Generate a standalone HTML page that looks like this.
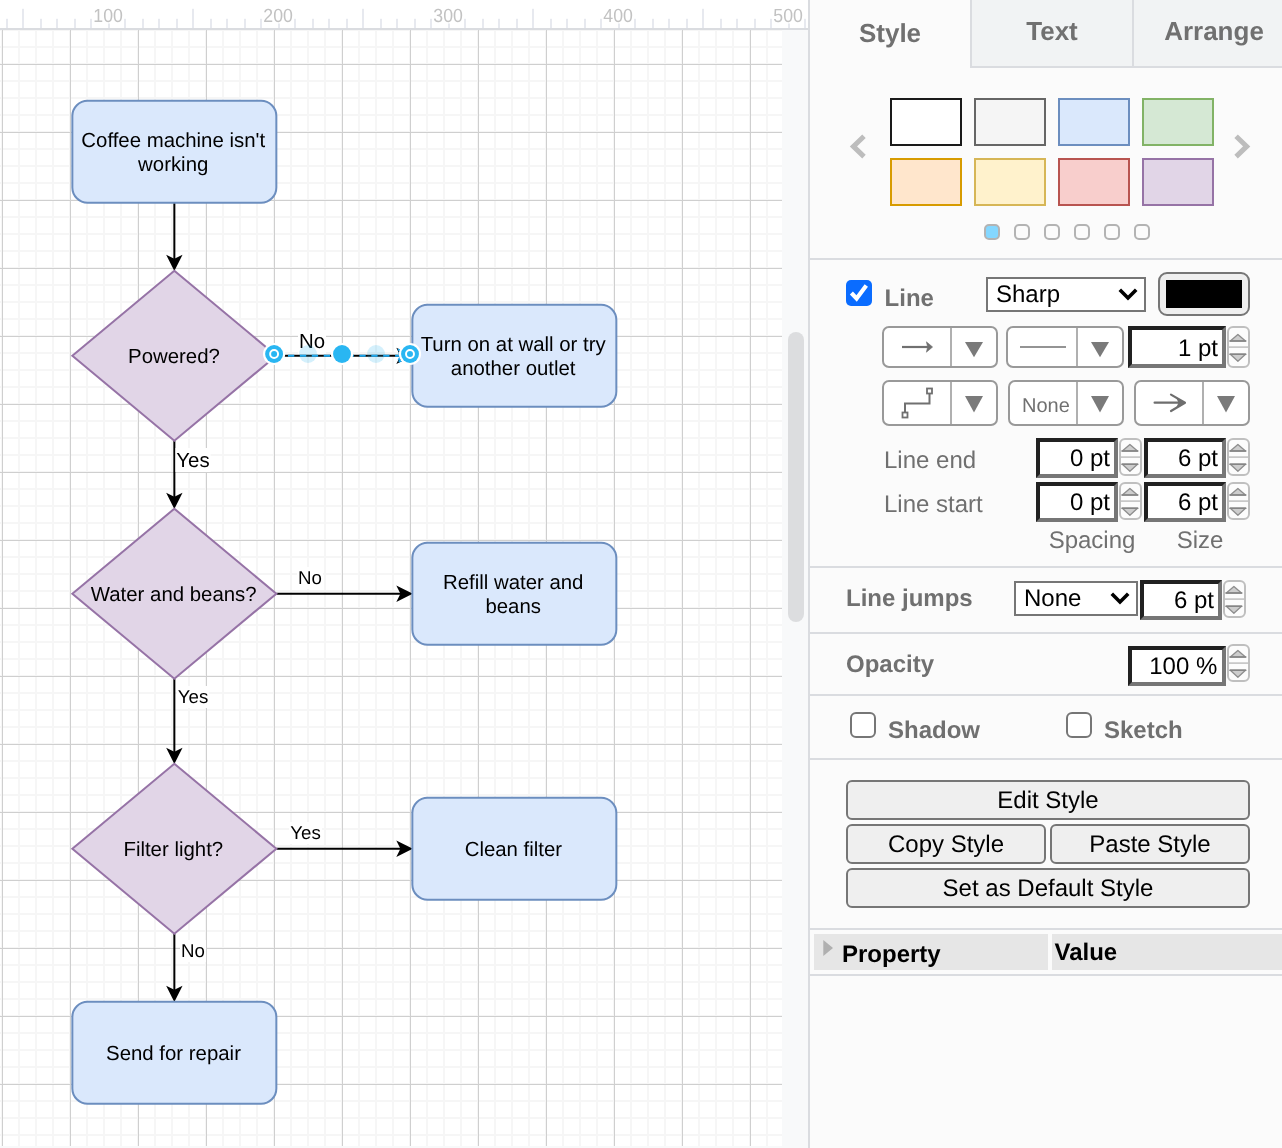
<!DOCTYPE html>
<html lang="en"><head><meta charset="utf-8"><title>Flowchart editor</title>
<style>
*{box-sizing:border-box}
html,body{margin:0;padding:0}
body{width:1282px;height:1148px;overflow:hidden;position:relative;background:#fff;-webkit-font-smoothing:antialiased;text-rendering:geometricPrecision;font-family:"Liberation Sans",sans-serif;color:#000}
.abs{position:absolute}
#canvas{left:0;top:30px;width:782px;height:1116px;background-color:#fff;
 background-image:
  linear-gradient(to right,#cfcfcf 1px,transparent 1px),
  linear-gradient(to bottom,#cfcfcf 1px,transparent 1px),
  linear-gradient(to right,#f6f6f6 2px,transparent 2px),
  linear-gradient(to bottom,#f6f6f6 2px,transparent 2px);
 background-size:68px 68px,68px 68px,17px 17px,17px 17px;
 background-position:2px 34px,2px 34px,1px -1px,1px -1px;}
#track{left:782px;top:30px;width:26px;height:1118px;background:#f8f9fa}
#thumb{left:788px;top:332px;width:16px;height:290px;border-radius:8px;background:#dcdddf}
#ruler{left:0;top:0;width:808px;height:30px;background:#fff;border-bottom:2px solid #dadce0}
#panel{left:808px;top:0;width:474px;height:1148px;background:#fbfbfb;border-left:2px solid #dadce0}
.tab{top:0;height:68px;font-weight:bold;font-size:26px;color:#707070;text-align:center;line-height:30px}
.tab.off{background:#f1f3f4;border-left:2px solid #dadce0;border-bottom:2px solid #dadce0}
.hr{left:810px;width:472px;height:2px;background:#dadce0}
.sw{width:72px;height:48px;border:2px solid #000}
.dot{width:16px;height:16px;border:2px solid #b3b3b3;border-radius:5px;top:224px}
.lbl{font-size:24px;color:#707070;white-space:nowrap;line-height:28px;margin-top:1px}
.b{font-weight:bold}
.sel{background:#fff;border:2px solid #767676;font-size:24px;line-height:28px;color:#000;white-space:nowrap}
.inp{background:#fff;border-style:solid;border-width:4px;border-color:#212121 #767676 #767676 #212121;font-size:24px;color:#000;text-align:right;white-space:nowrap}
.spin{border:2px solid #bfbfbf;border-radius:6px;background:#fcfcfc}
.cb{border:2px solid #999;border-radius:7px;background:#fff}
.cb i{position:absolute;top:0;bottom:0;width:2px;background:#b0b0b0}
.btn{background:#efefef;border:2px solid #767676;border-radius:6px;font-size:24px;color:#000;text-align:center;white-space:nowrap}
.chk{border:2px solid #767676;border-radius:6px;background:#fff;width:26px;height:26px}
svg{position:absolute;overflow:visible}
svg text{font-family:"Liberation Sans",sans-serif}
#wrap{position:absolute;left:0;top:0;width:1282px;height:1148px;overflow:hidden;will-change:transform}
</style></head><body><div id="wrap">

<div id="canvas" class="abs"></div>
<div id="track" class="abs"></div><div class="abs" style="left:0;top:1146px;width:808px;height:2px;background:#f8f9fa"></div><div id="thumb" class="abs"></div>
<svg class="abs" style="left:0;top:0" width="808" height="1148" viewBox="0 0 808 1148"><defs><clipPath id="cv"><rect x="0" y="30" width="782" height="1116"/></clipPath></defs><g clip-path="url(#cv)">
<g transform="translate(-0.15,-0.3)">
<path d="M174.5 203 L174.5 262" stroke="#000" stroke-width="2" fill="none"/>
<path d="M174.5 269.1 L168.55 257.2 L174.5 260.2 L180.45 257.2 Z" fill="#000" stroke="#000" stroke-width="2" stroke-linejoin="miter"/>
<path d="M174.5 441 L174.5 500" stroke="#000" stroke-width="2" fill="none"/>
<path d="M174.5 507.1 L168.55 495.2 L174.5 498.2 L180.45 495.2 Z" fill="#000" stroke="#000" stroke-width="2" stroke-linejoin="miter"/>
<path d="M174.5 679 L174.5 755" stroke="#000" stroke-width="2" fill="none"/>
<path d="M174.5 762.1 L168.55 750.2 L174.5 753.2 L180.45 750.2 Z" fill="#000" stroke="#000" stroke-width="2" stroke-linejoin="miter"/>
<path d="M174.5 934 L174.5 993" stroke="#000" stroke-width="2" fill="none"/>
<path d="M174.5 1000.1 L168.55 988.2 L174.5 991.2 L180.45 988.2 Z" fill="#000" stroke="#000" stroke-width="2" stroke-linejoin="miter"/>
<path d="M276.5 594 L403.5 594" stroke="#000" stroke-width="2" fill="none"/>
<path d="M410.6 594 L398.7 588.05 L401.7 594 L398.7 599.95 Z" fill="#000" stroke="#000" stroke-width="2" stroke-linejoin="miter"/>
<path d="M276.5 849 L403.5 849" stroke="#000" stroke-width="2" fill="none"/>
<path d="M410.6 849 L398.7 843.05 L401.7 849 L398.7 854.95 Z" fill="#000" stroke="#000" stroke-width="2" stroke-linejoin="miter"/>
<path d="M276.5 356.15 L403.5 356.15" stroke="#000" stroke-width="2" fill="none"/>
<path d="M410.6 356.15 L398.7 350.2 L401.7 356.15 L398.7 362.09999999999997 Z" fill="#000" stroke="#000" stroke-width="2" stroke-linejoin="miter"/>
<rect x="72.5" y="101" width="204" height="102" rx="15.3" ry="15.3" fill="#dae8fc" stroke="#6c8ebf" stroke-width="2"/>
<path d="M174.5 271 L276.5 356.0 L174.5 441 L72.5 356.0 Z" fill="#e1d5e7" stroke="#9673a6" stroke-width="2" stroke-linejoin="miter"/>
<rect x="412.5" y="305" width="204" height="102" rx="15.3" ry="15.3" fill="#dae8fc" stroke="#6c8ebf" stroke-width="2"/>
<path d="M174.5 509 L276.5 594.0 L174.5 679 L72.5 594.0 Z" fill="#e1d5e7" stroke="#9673a6" stroke-width="2" stroke-linejoin="miter"/>
<rect x="412.5" y="543" width="204" height="102" rx="15.3" ry="15.3" fill="#dae8fc" stroke="#6c8ebf" stroke-width="2"/>
<path d="M174.5 764 L276.5 849.0 L174.5 934 L72.5 849.0 Z" fill="#e1d5e7" stroke="#9673a6" stroke-width="2" stroke-linejoin="miter"/>
<rect x="412.5" y="798" width="204" height="102" rx="15.3" ry="15.3" fill="#dae8fc" stroke="#6c8ebf" stroke-width="2"/>
<rect x="72.5" y="1002" width="204" height="102" rx="15.3" ry="15.3" fill="#dae8fc" stroke="#6c8ebf" stroke-width="2"/>
</g>
<text x="173.2" y="146.7" font-size="20.4" text-anchor="middle" fill="#000">Coffee machine isn't</text>
<text x="173.2" y="171.1" font-size="20.4" text-anchor="middle" fill="#000">working</text>
<text x="174.0" y="362.9" font-size="20.4" text-anchor="middle" fill="#000">Powered?</text>
<text x="513.2" y="350.7" font-size="20.4" text-anchor="middle" fill="#000">Turn on at wall or try</text>
<text x="513.2" y="375.1" font-size="20.4" text-anchor="middle" fill="#000">another outlet</text>
<text x="173.7" y="600.9" font-size="20.4" text-anchor="middle" fill="#000">Water and beans?</text>
<text x="513.2" y="588.7" font-size="20.4" text-anchor="middle" fill="#000">Refill water and</text>
<text x="513.2" y="613.1" font-size="20.4" text-anchor="middle" fill="#000">beans</text>
<text x="173.3" y="855.9" font-size="20.4" text-anchor="middle" fill="#000">Filter light?</text>
<text x="513.4" y="855.9" font-size="20.4" text-anchor="middle" fill="#000">Clean filter</text>
<text x="173.5" y="1059.9" font-size="20.4" text-anchor="middle" fill="#000">Send for repair</text>
<rect x="298" y="330" width="28" height="24" fill="#fff"/>
<text x="312.0" y="348" font-size="20.4" text-anchor="middle" fill="#000">No</text>
<rect x="175.5" y="448" width="35" height="24" fill="#fff"/>
<text x="193.0" y="467" font-size="20.4" text-anchor="middle" fill="#000">Yes</text>
<rect x="297" y="567" width="26" height="22" fill="#fff"/>
<text x="310.0" y="584" font-size="18.7" text-anchor="middle" fill="#000">No</text>
<rect x="177" y="686" width="32" height="22" fill="#fff"/>
<text x="193.0" y="703" font-size="18.7" text-anchor="middle" fill="#000">Yes</text>
<rect x="289" y="822" width="33" height="22" fill="#fff"/>
<text x="305.5" y="839" font-size="18.7" text-anchor="middle" fill="#000">Yes</text>
<rect x="180" y="940" width="26" height="22" fill="#fff"/>
<text x="193.0" y="957" font-size="18.7" text-anchor="middle" fill="#000">No</text>
<path d="M276.1 355.85 L410 355.85" stroke="#1ca8f0" stroke-width="2" stroke-dasharray="6.3 5.6" fill="none"/>
<path d="M410.4 355.85 L397.4 349.2 L400.8 355.85 L397.4 362.5 Z" stroke="#1ca8f0" stroke-width="2" stroke-dasharray="9 4" stroke-dashoffset="-5" fill="none"/>
<circle cx="308" cy="354" r="8.95" fill="#29b6f2" fill-opacity="0.2"/>
<circle cx="376" cy="354" r="8.95" fill="#29b6f2" fill-opacity="0.2"/>
<circle cx="342" cy="354" r="11.1" fill="#fff"/><circle cx="342" cy="354" r="8.95" fill="#29b6f2"/>
<circle cx="274.1" cy="354" r="11.1" fill="#fff"/><circle cx="274.1" cy="354" r="8.95" fill="#29b6f2"/>
<circle cx="274.1" cy="354" r="3.97" fill="#29b6f2" stroke="#fff" stroke-width="1.95"/>
<circle cx="410" cy="354" r="11.1" fill="#fff"/><circle cx="410" cy="354" r="8.95" fill="#29b6f2"/>
<circle cx="410" cy="354" r="3.97" fill="#29b6f2" stroke="#fff" stroke-width="1.95"/>
</g></svg>
<div id="ruler" class="abs"></div>
<svg class="abs" style="left:0;top:0" width="808" height="30" viewBox="0 0 808 30"><rect x="6" y="18.8" width="2" height="9.2" fill="#e7e9ef"/><rect x="22" y="8.8" width="2" height="19.2" fill="#e7e9ef"/><rect x="40" y="18.8" width="2" height="9.2" fill="#e7e9ef"/><rect x="56" y="18.8" width="2" height="9.2" fill="#e7e9ef"/><rect x="74" y="18.8" width="2" height="9.2" fill="#e7e9ef"/><rect x="90" y="18.8" width="2" height="9.2" fill="#e7e9ef"/><rect x="108" y="18.8" width="2" height="9.2" fill="#e7e9ef"/><rect x="124" y="18.8" width="2" height="9.2" fill="#e7e9ef"/><rect x="142" y="18.8" width="2" height="9.2" fill="#e7e9ef"/><rect x="158" y="18.8" width="2" height="9.2" fill="#e7e9ef"/><rect x="176" y="18.8" width="2" height="9.2" fill="#e7e9ef"/><rect x="192" y="8.8" width="2" height="19.2" fill="#e7e9ef"/><rect x="210" y="18.8" width="2" height="9.2" fill="#e7e9ef"/><rect x="226" y="18.8" width="2" height="9.2" fill="#e7e9ef"/><rect x="244" y="18.8" width="2" height="9.2" fill="#e7e9ef"/><rect x="260" y="18.8" width="2" height="9.2" fill="#e7e9ef"/><rect x="278" y="18.8" width="2" height="9.2" fill="#e7e9ef"/><rect x="294" y="18.8" width="2" height="9.2" fill="#e7e9ef"/><rect x="312" y="18.8" width="2" height="9.2" fill="#e7e9ef"/><rect x="328" y="18.8" width="2" height="9.2" fill="#e7e9ef"/><rect x="346" y="18.8" width="2" height="9.2" fill="#e7e9ef"/><rect x="362" y="8.8" width="2" height="19.2" fill="#e7e9ef"/><rect x="380" y="18.8" width="2" height="9.2" fill="#e7e9ef"/><rect x="396" y="18.8" width="2" height="9.2" fill="#e7e9ef"/><rect x="414" y="18.8" width="2" height="9.2" fill="#e7e9ef"/><rect x="430" y="18.8" width="2" height="9.2" fill="#e7e9ef"/><rect x="448" y="18.8" width="2" height="9.2" fill="#e7e9ef"/><rect x="464" y="18.8" width="2" height="9.2" fill="#e7e9ef"/><rect x="482" y="18.8" width="2" height="9.2" fill="#e7e9ef"/><rect x="498" y="18.8" width="2" height="9.2" fill="#e7e9ef"/><rect x="516" y="18.8" width="2" height="9.2" fill="#e7e9ef"/><rect x="532" y="8.8" width="2" height="19.2" fill="#e7e9ef"/><rect x="550" y="18.8" width="2" height="9.2" fill="#e7e9ef"/><rect x="566" y="18.8" width="2" height="9.2" fill="#e7e9ef"/><rect x="584" y="18.8" width="2" height="9.2" fill="#e7e9ef"/><rect x="600" y="18.8" width="2" height="9.2" fill="#e7e9ef"/><rect x="618" y="18.8" width="2" height="9.2" fill="#e7e9ef"/><rect x="634" y="18.8" width="2" height="9.2" fill="#e7e9ef"/><rect x="652" y="18.8" width="2" height="9.2" fill="#e7e9ef"/><rect x="668" y="18.8" width="2" height="9.2" fill="#e7e9ef"/><rect x="686" y="18.8" width="2" height="9.2" fill="#e7e9ef"/><rect x="702" y="8.8" width="2" height="19.2" fill="#e7e9ef"/><rect x="720" y="18.8" width="2" height="9.2" fill="#e7e9ef"/><rect x="736" y="18.8" width="2" height="9.2" fill="#e7e9ef"/><rect x="754" y="18.8" width="2" height="9.2" fill="#e7e9ef"/><rect x="770" y="18.8" width="2" height="9.2" fill="#e7e9ef"/><rect x="788" y="18.8" width="2" height="9.2" fill="#e7e9ef"/><rect x="804" y="18.8" width="2" height="9.2" fill="#e7e9ef"/><rect x="93.3" y="7" width="30" height="16.5" fill="#fff"/><text x="93.3" y="21.7" font-size="19" textLength="29.5" lengthAdjust="spacingAndGlyphs" fill="#c2c2c2">100</text><rect x="263.3" y="7" width="30" height="16.5" fill="#fff"/><text x="263.3" y="21.7" font-size="19" textLength="29.5" lengthAdjust="spacingAndGlyphs" fill="#c2c2c2">200</text><rect x="433.3" y="7" width="30" height="16.5" fill="#fff"/><text x="433.3" y="21.7" font-size="19" textLength="29.5" lengthAdjust="spacingAndGlyphs" fill="#c2c2c2">300</text><rect x="603.3" y="7" width="30" height="16.5" fill="#fff"/><text x="603.3" y="21.7" font-size="19" textLength="29.5" lengthAdjust="spacingAndGlyphs" fill="#c2c2c2">400</text><rect x="773.3" y="7" width="30" height="16.5" fill="#fff"/><text x="773.3" y="21.7" font-size="19" textLength="29.5" lengthAdjust="spacingAndGlyphs" fill="#c2c2c2">500</text></svg>
<div id="panel" class="abs"></div>
<div class="abs tab" style="left:810px;width:160px;padding-top:18px">Style</div>
<div class="abs tab off" style="left:970px;width:162px;padding-top:16px">Text</div>
<div class="abs tab off" style="left:1132px;width:162px;padding-top:16px">Arrange</div>
<div class="abs sw" style="left:890px;top:98px;background:#ffffff;border-color:#1a1a1a"></div>
<div class="abs sw" style="left:974px;top:98px;background:#f5f5f5;border-color:#666666"></div>
<div class="abs sw" style="left:1058px;top:98px;background:#dae8fc;border-color:#6c8ebf"></div>
<div class="abs sw" style="left:1142px;top:98px;background:#d5e8d4;border-color:#82b366"></div>
<div class="abs sw" style="left:890px;top:158px;background:#ffe6cc;border-color:#d79b00"></div>
<div class="abs sw" style="left:974px;top:158px;background:#fff2cc;border-color:#d6b656"></div>
<div class="abs sw" style="left:1058px;top:158px;background:#f8cecc;border-color:#b85450"></div>
<div class="abs sw" style="left:1142px;top:158px;background:#e1d5e7;border-color:#9673a6"></div>
<div class="abs dot" style="left:984px;background:#84d7ff"></div>
<div class="abs dot" style="left:1014px;background:transparent"></div>
<div class="abs dot" style="left:1044px;background:transparent"></div>
<div class="abs dot" style="left:1074px;background:transparent"></div>
<div class="abs dot" style="left:1104px;background:transparent"></div>
<div class="abs dot" style="left:1134px;background:transparent"></div>
<svg class="abs" style="left:846px;top:130px" width="24" height="32" viewBox="0 0 24 32"><path d="M18 6.2 L7.4 16.4 L18 26.6" fill="none" stroke="#bdbdbd" stroke-width="5" stroke-linejoin="miter"/></svg>
<svg class="abs" style="left:1230px;top:130px" width="24" height="32" viewBox="0 0 24 32"><path d="M6.1 6.2 L16.7 16.4 L6.1 26.6" fill="none" stroke="#bdbdbd" stroke-width="5" stroke-linejoin="miter"/></svg>
<div class="abs hr" style="top:258px"></div>
<div class="abs hr" style="top:566px"></div>
<div class="abs hr" style="top:632px"></div>
<div class="abs hr" style="top:694px"></div>
<div class="abs hr" style="top:758px"></div>
<div class="abs hr" style="top:928px"></div>
<div class="abs hr" style="top:974px"></div>
<div class="abs" style="left:846px;top:280px;width:26px;height:26px;border-radius:5px;background:#0a6cff"><svg style="left:0;top:0" width="26" height="26" viewBox="0 0 26 26"><path d="M5.4 13 L10.6 18.4 L20.3 5.6" fill="none" stroke="#fff" stroke-width="4.2" stroke-linecap="butt" stroke-linejoin="miter"/></svg></div>
<div class="abs lbl b" style="left:884.6px;top:284px">Line</div>
<div class="abs sel" style="left:986px;top:276.5px;width:160px;height:35px"><span class="abs" style="left:8px;top:2.5px">Sharp</span><svg style="right:6.5px;top:9.3px" width="20" height="13" viewBox="0 0 20 13"><path d="M1.8 1.8 L10 10 L18.2 1.8" fill="none" stroke="#000" stroke-width="3.6"/></svg></div>
<div class="abs" style="left:1158px;top:272px;width:92px;height:44px;border:2px solid #767676;border-radius:9px;background:#efefef"><div class="abs" style="left:6px;top:6px;width:76px;height:28px;background:#000"></div></div>
<div class="abs cb" style="left:882px;top:326px;width:116px;height:42px"><i style="left:66px"></i><svg style="left:16px;top:9px" width="36" height="20" viewBox="0 0 36 20"><path d="M2 10 L29 10" stroke="#707070" stroke-width="2.2" fill="none"/><path d="M32.6 10 L26.4 4.8 L27.6 10 L26.4 15.2 Z" fill="#707070" stroke="#707070" stroke-width="0.6" stroke-linejoin="round"/></svg><svg style="left:80.3px;top:13px" width="20" height="18" viewBox="0 0 20 18"><path d="M1 1 L19 1 L10 16.2 Z" fill="#7a7a7a"/></svg></div>
<div class="abs cb" style="left:1006px;top:326px;width:118px;height:42px"><i style="left:68px"></i><svg style="left:12px;top:9px" width="50" height="20" viewBox="0 0 50 20"><path d="M0 10 L46 10" stroke="#707070" stroke-width="1.6" fill="none"/></svg><svg style="left:82.3px;top:13px" width="20" height="18" viewBox="0 0 20 18"><path d="M1 1 L19 1 L10 16.2 Z" fill="#7a7a7a"/></svg></div>
<div class="abs inp" style="left:1128px;top:326px;width:98px;height:42px;line-height:34px;padding-right:4px"><span style="position:relative;top:1.9px">1 pt</span></div>
<div class="abs spin" style="left:1227px;top:326px;width:23px;height:42px"><svg style="left:-2px;top:-2px" width="23" height="42" viewBox="0 0 23 42"><path d="M1 21.1 L22 21.1" stroke="#bebebe" stroke-width="1.5"/><path d="M10.9 8.4 L18.5 15.0 L3.3000000000000007 15.0 Z" fill="#cdcdcd" stroke="#8e8e8e" stroke-width="1.3" stroke-linejoin="round"/><path d="M3.0 15.0 L18.8 15.0" stroke="#858585" stroke-width="1.6" stroke-linecap="round"/><path d="M10.9 35.2 L18.5 28.2 L3.3000000000000007 28.2 Z" fill="#cdcdcd" stroke="#8e8e8e" stroke-width="1.3" stroke-linejoin="round"/><path d="M3.0 28.2 L18.8 28.2" stroke="#858585" stroke-width="1.6" stroke-linecap="round"/></svg></div>
<div class="abs cb" style="left:882px;top:380px;width:116px;height:46px"><i style="left:66px"></i><svg style="left:12px;top:3px" width="44" height="36" viewBox="0 0 44 36"><path d="M9 29 L9 18.5 L33.5 18.5 L33.5 8" stroke="#707070" stroke-width="2" fill="none"/><rect x="6.5" y="27.5" width="5" height="5" fill="#fff" stroke="#707070" stroke-width="1.8"/><rect x="31" y="3.5" width="5" height="5" fill="#fff" stroke="#707070" stroke-width="1.8"/></svg><svg style="left:80.3px;top:12.7px" width="20" height="18" viewBox="0 0 20 18"><path d="M1 1 L19 1 L10 17.6 Z" fill="#7a7a7a"/></svg></div>
<div class="abs cb" style="left:1008px;top:380px;width:116px;height:46px"><i style="left:66px"></i><span class="abs" style="left:12px;top:11.5px;font-size:20px;line-height:24px;color:#707070">None</span><svg style="left:80.3px;top:12.7px" width="20" height="18" viewBox="0 0 20 18"><path d="M1 1 L19 1 L10 17.6 Z" fill="#7a7a7a"/></svg></div>
<div class="abs cb" style="left:1134px;top:380px;width:116px;height:46px"><i style="left:66px"></i><svg style="left:14px;top:8px" width="40" height="26" viewBox="0 0 40 26"><path d="M4.6 12.7 L34 12.7 M21 4.6 L35 12.7 L21 21" stroke="#6e6e6e" stroke-width="2.2" fill="none" stroke-linejoin="round" stroke-linecap="round"/><path d="M35 12.7 L26 7.6 L28.5 12.7 L26 18 Z" fill="#6e6e6e"/></svg><svg style="left:80.3px;top:12.7px" width="20" height="18" viewBox="0 0 20 18"><path d="M1 1 L19 1 L10 17.6 Z" fill="#7a7a7a"/></svg></div>
<div class="abs lbl" style="left:884px;top:446px">Line end</div>
<div class="abs lbl" style="left:884px;top:490px">Line start</div>
<div class="abs inp" style="left:1036px;top:438px;width:82px;height:40px;line-height:32px;padding-right:4px"><span style="position:relative;top:1.2px">0 pt</span></div>
<div class="abs spin" style="left:1119px;top:438px;width:23px;height:38px"><svg style="left:-2px;top:-2px" width="23" height="38" viewBox="0 0 23 38"><path d="M1 19.1 L22 19.1" stroke="#bebebe" stroke-width="1.5"/><path d="M10.9 6.4 L18.5 13.0 L3.3000000000000007 13.0 Z" fill="#cdcdcd" stroke="#8e8e8e" stroke-width="1.3" stroke-linejoin="round"/><path d="M3.0 13.0 L18.8 13.0" stroke="#858585" stroke-width="1.6" stroke-linecap="round"/><path d="M10.9 33.2 L18.5 26.2 L3.3000000000000007 26.2 Z" fill="#cdcdcd" stroke="#8e8e8e" stroke-width="1.3" stroke-linejoin="round"/><path d="M3.0 26.2 L18.8 26.2" stroke="#858585" stroke-width="1.6" stroke-linecap="round"/></svg></div>
<div class="abs inp" style="left:1144px;top:438px;width:82px;height:40px;line-height:32px;padding-right:4px"><span style="position:relative;top:1.2px">6 pt</span></div>
<div class="abs spin" style="left:1227px;top:438px;width:23px;height:38px"><svg style="left:-2px;top:-2px" width="23" height="38" viewBox="0 0 23 38"><path d="M1 19.1 L22 19.1" stroke="#bebebe" stroke-width="1.5"/><path d="M10.9 6.4 L18.5 13.0 L3.3000000000000007 13.0 Z" fill="#cdcdcd" stroke="#8e8e8e" stroke-width="1.3" stroke-linejoin="round"/><path d="M3.0 13.0 L18.8 13.0" stroke="#858585" stroke-width="1.6" stroke-linecap="round"/><path d="M10.9 33.2 L18.5 26.2 L3.3000000000000007 26.2 Z" fill="#cdcdcd" stroke="#8e8e8e" stroke-width="1.3" stroke-linejoin="round"/><path d="M3.0 26.2 L18.8 26.2" stroke="#858585" stroke-width="1.6" stroke-linecap="round"/></svg></div>
<div class="abs inp" style="left:1036px;top:482px;width:82px;height:40px;line-height:32px;padding-right:4px"><span style="position:relative;top:1.2px">0 pt</span></div>
<div class="abs spin" style="left:1119px;top:482px;width:23px;height:38px"><svg style="left:-2px;top:-2px" width="23" height="38" viewBox="0 0 23 38"><path d="M1 19.1 L22 19.1" stroke="#bebebe" stroke-width="1.5"/><path d="M10.9 6.4 L18.5 13.0 L3.3000000000000007 13.0 Z" fill="#cdcdcd" stroke="#8e8e8e" stroke-width="1.3" stroke-linejoin="round"/><path d="M3.0 13.0 L18.8 13.0" stroke="#858585" stroke-width="1.6" stroke-linecap="round"/><path d="M10.9 33.2 L18.5 26.2 L3.3000000000000007 26.2 Z" fill="#cdcdcd" stroke="#8e8e8e" stroke-width="1.3" stroke-linejoin="round"/><path d="M3.0 26.2 L18.8 26.2" stroke="#858585" stroke-width="1.6" stroke-linecap="round"/></svg></div>
<div class="abs inp" style="left:1144px;top:482px;width:82px;height:40px;line-height:32px;padding-right:4px"><span style="position:relative;top:1.2px">6 pt</span></div>
<div class="abs spin" style="left:1227px;top:482px;width:23px;height:38px"><svg style="left:-2px;top:-2px" width="23" height="38" viewBox="0 0 23 38"><path d="M1 19.1 L22 19.1" stroke="#bebebe" stroke-width="1.5"/><path d="M10.9 6.4 L18.5 13.0 L3.3000000000000007 13.0 Z" fill="#cdcdcd" stroke="#8e8e8e" stroke-width="1.3" stroke-linejoin="round"/><path d="M3.0 13.0 L18.8 13.0" stroke="#858585" stroke-width="1.6" stroke-linecap="round"/><path d="M10.9 33.2 L18.5 26.2 L3.3000000000000007 26.2 Z" fill="#cdcdcd" stroke="#8e8e8e" stroke-width="1.3" stroke-linejoin="round"/><path d="M3.0 26.2 L18.8 26.2" stroke="#858585" stroke-width="1.6" stroke-linecap="round"/></svg></div>
<div class="abs lbl" style="left:1032px;width:120px;text-align:center;top:526px">Spacing</div>
<div class="abs lbl" style="left:1140px;width:120px;text-align:center;top:526px">Size</div>
<div class="abs lbl b" style="left:846px;top:584px">Line jumps</div>
<div class="abs sel" style="left:1014px;top:580.5px;width:124px;height:35px"><span class="abs" style="left:8px;top:2.5px">None</span><svg style="right:6.5px;top:9.3px" width="20" height="13" viewBox="0 0 20 13"><path d="M1.8 1.8 L10 10 L18.2 1.8" fill="none" stroke="#000" stroke-width="3.6"/></svg></div>
<div class="abs inp" style="left:1140px;top:580px;width:82px;height:40px;line-height:32px;padding-right:4px"><span style="position:relative;top:1.2px">6 pt</span></div>
<div class="abs spin" style="left:1223px;top:580px;width:23px;height:38px"><svg style="left:-2px;top:-2px" width="23" height="38" viewBox="0 0 23 38"><path d="M1 19.1 L22 19.1" stroke="#bebebe" stroke-width="1.5"/><path d="M10.9 6.4 L18.5 13.0 L3.3000000000000007 13.0 Z" fill="#cdcdcd" stroke="#8e8e8e" stroke-width="1.3" stroke-linejoin="round"/><path d="M3.0 13.0 L18.8 13.0" stroke="#858585" stroke-width="1.6" stroke-linecap="round"/><path d="M10.9 33.2 L18.5 26.2 L3.3000000000000007 26.2 Z" fill="#cdcdcd" stroke="#8e8e8e" stroke-width="1.3" stroke-linejoin="round"/><path d="M3.0 26.2 L18.8 26.2" stroke="#858585" stroke-width="1.6" stroke-linecap="round"/></svg></div>
<div class="abs lbl b" style="left:846px;top:650px">Opacity</div>
<div class="abs inp" style="left:1128px;top:646px;width:98px;height:40px;line-height:32px;padding-right:4.7px"><span style="position:relative;top:1.2px">100 %</span></div>
<div class="abs spin" style="left:1227px;top:644px;width:23px;height:38px"><svg style="left:-2px;top:-2px" width="23" height="38" viewBox="0 0 23 38"><path d="M1 19.1 L22 19.1" stroke="#bebebe" stroke-width="1.5"/><path d="M10.9 6.4 L18.5 13.0 L3.3000000000000007 13.0 Z" fill="#cdcdcd" stroke="#8e8e8e" stroke-width="1.3" stroke-linejoin="round"/><path d="M3.0 13.0 L18.8 13.0" stroke="#858585" stroke-width="1.6" stroke-linecap="round"/><path d="M10.9 33.2 L18.5 26.2 L3.3000000000000007 26.2 Z" fill="#cdcdcd" stroke="#8e8e8e" stroke-width="1.3" stroke-linejoin="round"/><path d="M3.0 26.2 L18.8 26.2" stroke="#858585" stroke-width="1.6" stroke-linecap="round"/></svg></div>
<div class="abs chk" style="left:850px;top:712px"></div><div class="abs lbl b" style="left:888px;top:716px">Shadow</div>
<div class="abs chk" style="left:1066px;top:712px"></div><div class="abs lbl b" style="left:1104px;top:716px">Sketch</div>
<div class="abs btn" style="left:846px;top:780px;width:404px;height:40px;line-height:36px"><span style="position:relative;top:1.2px">Edit Style</span></div>
<div class="abs btn" style="left:846px;top:824px;width:200px;height:40px;line-height:36px"><span style="position:relative;top:1.2px">Copy Style</span></div>
<div class="abs btn" style="left:1050px;top:824px;width:200px;height:40px;line-height:36px"><span style="position:relative;top:1.2px">Paste Style</span></div>
<div class="abs btn" style="left:846px;top:868px;width:404px;height:40px;line-height:36px"><span style="position:relative;top:1.2px">Set as Default Style</span></div>
<div class="abs" style="left:814px;top:934px;width:234px;height:36px;background:#e6e6e6"></div>
<div class="abs" style="left:1052px;top:934px;width:230px;height:36px;background:#e6e6e6"></div>
<svg class="abs" style="left:822px;top:939px" width="12" height="18" viewBox="0 0 12 18"><path d="M1.3 1 L11 9 L1.3 17 Z" fill="#b0b0b0"/></svg>
<div class="abs b" style="left:842px;top:940.5px;font-size:24px;line-height:28px;color:#000">Property</div>
<div class="abs b" style="left:1054.5px;top:938.5px;font-size:24px;line-height:28px;color:#000">Value</div>
</div></body></html>
